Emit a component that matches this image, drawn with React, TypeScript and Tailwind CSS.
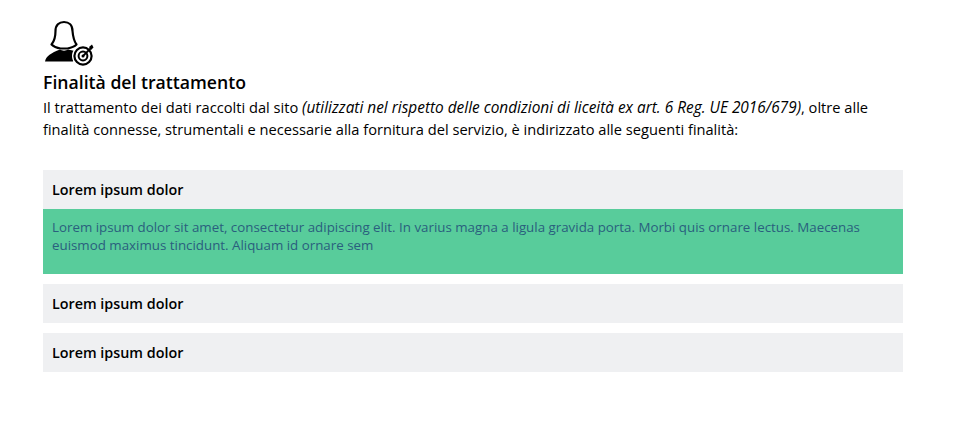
export default function App() {
  const Row = ({ className = "" }: { className?: string }) => (
    <div className={`h-[39px] bg-[#eff0f2] px-[9px] flex items-center text-[14.33px] font-semibold text-black ${className}`}>Lorem ipsum dolor</div>
  );
  return (
    <div className="h-[447px] bg-white pl-[43px] pr-[56px] pt-[20px] font-['Open_Sans',sans-serif] text-black overflow-hidden">
      <svg width="52" height="46" viewBox="0 0 52 46" className="block">
        <path d="M12.5 11 C12.5 5 16 2 21 2 C26 2 29.5 5 29.5 11 C30 17 31 21 33.5 24.5 C31 27 27 28 24.5 28.5 L17.5 28.5 C14 28 11 27 8.5 24.5 C11.5 21 12.5 16 12.5 11 Z" fill="none" stroke="#000" strokeWidth="2.2" strokeLinejoin="round" />
        <path d="M2 41.5 C3 36 8 33 17 29.5 C19 31 23 31 25 29.5 L34 31.5 L30 41.5 Z" fill="#000" />
        <circle cx="40" cy="36" r="11" fill="#fff" />
        <circle cx="40" cy="36" r="8.6" fill="none" stroke="#000" strokeWidth="2.2" />
        <circle cx="40" cy="36" r="4.4" fill="none" stroke="#000" strokeWidth="2" />
        <circle cx="40" cy="36" r="1.5" fill="#000" />
        <path d="M40 36 L48 28" stroke="#000" strokeWidth="1.8" />
        <path d="M46 27 L49 24.5 L50.5 27.5 L48 30 Z" fill="#000" />
      </svg>
      <h1 className="text-[17.65px] font-semibold leading-[24px] mt-[4px]">Finalità del trattamento</h1>
      <p className="text-[14.65px] leading-[22px] mt-[2px] mb-[30px]">
        Il trattamento dei dati raccolti dal sito <em className="text-[15.4px] leading-none">(utilizzati nel rispetto delle condizioni di liceità ex art. 6 Reg. UE 2016/679)</em>, oltre alle finalità connesse, strumentali e necessarie alla fornitura del servizio, è indirizzato alle seguenti finalità:
      </p>
      <div>
        <Row />
        <div className="h-[65px] bg-[#58cc9b] px-[9px] pt-[9px] text-[13.33px] leading-[18px] text-[#2a5f7e]">
          Lorem ipsum dolor sit amet, consectetur adipiscing elit. In varius magna a ligula gravida porta. Morbi quis ornare lectus. Maecenas euismod maximus tincidunt. Aliquam id ornare sem
        </div>
        <Row className="mt-[10px]" />
        <Row className="mt-[10px]" />
      </div>
    </div>
  );
}
